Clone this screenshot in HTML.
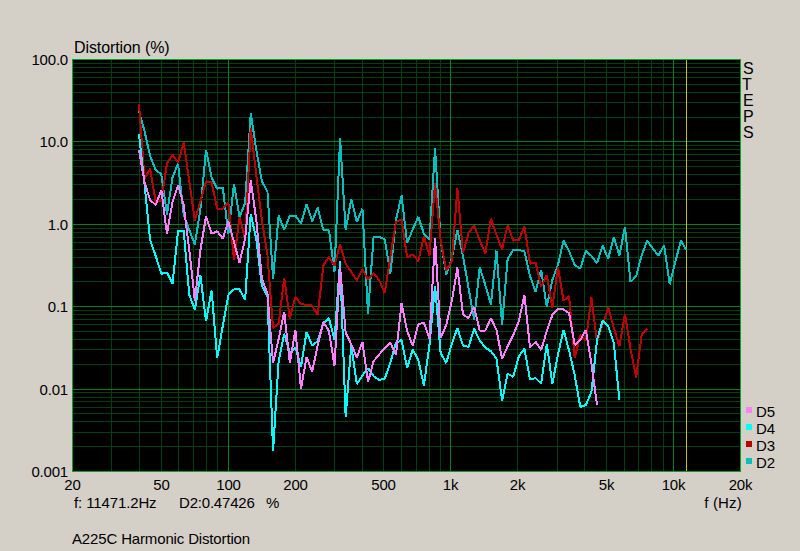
<!DOCTYPE html>
<html><head><meta charset="utf-8"><title>A225C Harmonic Distortion</title>
<style>
html,body{margin:0;padding:0;background:#d4d0c8;}
body{width:800px;height:551px;position:relative;overflow:hidden;font-family:"Liberation Sans",Arial,sans-serif;font-size:16px;color:#000;}
.t{position:absolute;white-space:pre;line-height:20px;height:20px;font-size:15px;}
.b{font-size:16px;}
</style></head><body>
<svg width="800" height="551" viewBox="0 0 800 551" style="position:absolute;left:0;top:0">
<rect x="72" y="59" width="669" height="413" fill="#000"/>
<rect x="72" y="446" width="669" height="1" fill="#004010"/>
<rect x="72" y="432" width="669" height="1" fill="#004010"/>
<rect x="72" y="421" width="669" height="1" fill="#004010"/>
<rect x="72" y="413" width="669" height="1" fill="#004010"/>
<rect x="72" y="407" width="669" height="1" fill="#004010"/>
<rect x="72" y="401" width="669" height="1" fill="#004010"/>
<rect x="72" y="397" width="669" height="1" fill="#004010"/>
<rect x="72" y="392" width="669" height="1" fill="#004010"/>
<rect x="72" y="364" width="669" height="1" fill="#004010"/>
<rect x="72" y="349" width="669" height="1" fill="#004010"/>
<rect x="72" y="339" width="669" height="1" fill="#004010"/>
<rect x="72" y="331" width="669" height="1" fill="#004010"/>
<rect x="72" y="324" width="669" height="1" fill="#004010"/>
<rect x="72" y="319" width="669" height="1" fill="#004010"/>
<rect x="72" y="314" width="669" height="1" fill="#004010"/>
<rect x="72" y="310" width="669" height="1" fill="#004010"/>
<rect x="72" y="281" width="669" height="1" fill="#004010"/>
<rect x="72" y="267" width="669" height="1" fill="#004010"/>
<rect x="72" y="257" width="669" height="1" fill="#004010"/>
<rect x="72" y="249" width="669" height="1" fill="#004010"/>
<rect x="72" y="242" width="669" height="1" fill="#004010"/>
<rect x="72" y="237" width="669" height="1" fill="#004010"/>
<rect x="72" y="232" width="669" height="1" fill="#004010"/>
<rect x="72" y="228" width="669" height="1" fill="#004010"/>
<rect x="72" y="199" width="669" height="1" fill="#004010"/>
<rect x="72" y="184" width="669" height="1" fill="#004010"/>
<rect x="72" y="174" width="669" height="1" fill="#004010"/>
<rect x="72" y="166" width="669" height="1" fill="#004010"/>
<rect x="72" y="160" width="669" height="1" fill="#004010"/>
<rect x="72" y="154" width="669" height="1" fill="#004010"/>
<rect x="72" y="149" width="669" height="1" fill="#004010"/>
<rect x="72" y="145" width="669" height="1" fill="#004010"/>
<rect x="72" y="117" width="669" height="1" fill="#004010"/>
<rect x="72" y="102" width="669" height="1" fill="#004010"/>
<rect x="72" y="92" width="669" height="1" fill="#004010"/>
<rect x="72" y="84" width="669" height="1" fill="#004010"/>
<rect x="72" y="77" width="669" height="1" fill="#004010"/>
<rect x="72" y="72" width="669" height="1" fill="#004010"/>
<rect x="72" y="67" width="669" height="1" fill="#004010"/>
<rect x="72" y="63" width="669" height="1" fill="#004010"/>
<rect x="111" y="59" width="1" height="413" fill="#004010"/>
<rect x="139" y="59" width="1" height="413" fill="#004010"/>
<rect x="161" y="59" width="1" height="413" fill="#004010"/>
<rect x="178" y="59" width="1" height="413" fill="#004010"/>
<rect x="193" y="59" width="1" height="413" fill="#004010"/>
<rect x="206" y="59" width="1" height="413" fill="#004010"/>
<rect x="217" y="59" width="1" height="413" fill="#004010"/>
<rect x="295" y="59" width="1" height="413" fill="#004010"/>
<rect x="334" y="59" width="1" height="413" fill="#004010"/>
<rect x="362" y="59" width="1" height="413" fill="#004010"/>
<rect x="383" y="59" width="1" height="413" fill="#004010"/>
<rect x="401" y="59" width="1" height="413" fill="#004010"/>
<rect x="416" y="59" width="1" height="413" fill="#004010"/>
<rect x="429" y="59" width="1" height="413" fill="#004010"/>
<rect x="440" y="59" width="1" height="413" fill="#004010"/>
<rect x="517" y="59" width="1" height="413" fill="#004010"/>
<rect x="557" y="59" width="1" height="413" fill="#004010"/>
<rect x="584" y="59" width="1" height="413" fill="#004010"/>
<rect x="606" y="59" width="1" height="413" fill="#004010"/>
<rect x="624" y="59" width="1" height="413" fill="#004010"/>
<rect x="638" y="59" width="1" height="413" fill="#004010"/>
<rect x="651" y="59" width="1" height="413" fill="#004010"/>
<rect x="663" y="59" width="1" height="413" fill="#004010"/>
<rect x="72" y="389" width="669" height="1" fill="#008220"/>
<rect x="72" y="306" width="669" height="1" fill="#008220"/>
<rect x="72" y="224" width="669" height="1" fill="#008220"/>
<rect x="72" y="141" width="669" height="1" fill="#008220"/>
<rect x="228" y="59" width="1" height="413" fill="#008220"/>
<rect x="450" y="59" width="1" height="413" fill="#008220"/>
<rect x="673" y="59" width="1" height="413" fill="#008220"/>
<rect x="686" y="59" width="1" height="413" fill="#c8c000"/>
<rect x="72.5" y="59.5" width="668" height="412" fill="none" stroke="#00a428" stroke-width="1"/>
<polyline points="139.00,111.25 144.59,131.40 150.17,156.25 155.76,170.00 161.34,174.40 166.93,214.40 172.51,177.50 178.10,163.75 183.69,215.00 189.27,230.00 194.86,244.40 200.44,209.00 206.03,150.00 211.62,177.50 217.20,188.75 222.79,187.50 228.37,234.00 233.96,183.75 239.54,217.20 245.13,203.00 250.72,113.10 256.30,150.00 261.89,181.25 267.47,191.90 273.06,278.75 278.64,215.60 284.23,230.00 289.82,215.60 295.40,215.60 300.99,223.75 306.57,204.40 312.16,221.25 317.74,207.50 323.33,230.00 328.92,230.00 334.50,271.90 340.09,138.10 345.67,230.00 351.26,198.75 356.85,221.90 362.43,208.75 368.02,313.75 373.60,236.90 379.19,236.90 384.77,239.40 390.36,273.75 395.95,220.00 401.53,195.60 407.12,243.10 412.70,229.40 418.29,216.90 423.87,233.75 429.46,240.00 435.05,148.10 440.63,241.00 446.22,274.40 451.80,258.75 457.39,230.00 462.98,256.00 468.56,288.00 474.15,320.00 479.73,266.90 485.32,285.00 490.90,304.40 496.49,250.60 502.08,325.00 507.66,258.75 513.25,250.00 518.83,250.00 524.42,251.25 530.00,276.00 535.59,291.90 541.18,270.00 546.76,306.90 552.35,280.00 557.93,265.00 563.52,240.60 569.10,251.25 574.69,265.00 580.28,268.75 585.86,250.60 591.45,256.00 597.03,263.10 602.62,245.60 608.21,258.75 613.79,236.90 619.38,255.60 624.96,226.90 630.55,282.00 636.13,276.25 641.72,255.00 647.31,240.60 652.89,248.75 658.48,255.60 664.06,245.00 669.65,284.30 675.23,262.50 680.82,240.60 686.41,250.00" fill="none" stroke="#00c0c0" stroke-width="2" stroke-linejoin="bevel" stroke-linecap="butt" shape-rendering="crispEdges"/>
<polyline points="139.00,104.40 144.59,178.75 150.17,168.75 155.76,201.90 161.34,200.50 166.93,163.75 172.51,154.60 178.10,162.50 183.69,142.50 189.27,181.00 194.86,220.60 200.44,201.00 206.03,181.25 211.62,182.50 217.20,208.75 222.79,208.75 228.37,202.50 233.96,260.00 239.54,217.50 245.13,239.00 250.72,128.10 256.30,175.00 261.89,220.00 267.47,255.00 273.06,328.10 278.64,323.75 284.23,278.10 289.82,318.75 295.40,296.90 300.99,304.40 306.57,304.60 312.16,305.60 317.74,315.00 323.33,265.60 328.92,256.90 334.50,265.60 340.09,244.40 345.67,263.75 351.26,271.90 356.85,280.60 362.43,269.40 368.02,279.40 373.60,273.10 379.19,280.00 384.77,293.10 390.36,257.00 395.95,221.90 401.53,219.40 407.12,257.50 412.70,254.40 418.29,261.25 423.87,236.25 429.46,255.60 435.05,183.10 440.63,240.00 446.22,270.60 451.80,261.25 457.39,188.10 462.98,253.10 468.56,233.10 474.15,225.60 479.73,240.00 485.32,253.75 490.90,218.75 496.49,235.00 502.08,249.40 507.66,225.00 513.25,240.60 518.83,240.00 524.42,226.25 530.00,263.75 535.59,262.50 541.18,286.90 546.76,275.00 552.35,308.10 557.93,266.90 563.52,300.60 569.10,296.25 574.69,358.10 580.28,335.00 585.86,340.60 591.45,297.50 597.03,342.00 602.62,325.00 608.21,307.50 613.79,328.00 619.38,346.25 624.96,313.75 630.55,349.00 636.13,377.50 641.72,334.40 647.31,328.75" fill="none" stroke="#c00000" stroke-width="2" stroke-linejoin="bevel" stroke-linecap="butt" shape-rendering="crispEdges"/>
<polyline points="139.00,134.40 144.59,185.00 150.17,240.00 155.76,256.25 161.34,273.75 166.93,272.50 172.51,283.75 178.10,230.60 183.69,230.60 189.27,295.00 194.86,309.40 200.44,275.60 206.03,321.25 211.62,290.60 217.20,358.10 222.79,326.00 228.37,295.00 233.96,289.40 239.54,289.40 245.13,300.00 250.72,213.75 256.30,239.00 261.89,286.00 267.47,296.00 273.06,451.00 278.64,361.00 284.23,333.75 289.82,352.50 295.40,347.50 300.99,366.90 306.57,331.90 312.16,345.60 317.74,341.00 323.33,323.75 328.92,318.10 334.50,340.00 340.09,260.60 345.67,417.00 351.26,345.00 356.85,384.00 362.43,375.60 368.02,368.10 373.60,376.25 379.19,380.00 384.77,378.75 390.36,362.50 395.95,343.10 401.53,340.00 407.12,368.10 412.70,349.40 418.29,360.00 423.87,385.60 429.46,345.00 435.05,285.60 440.63,353.00 446.22,363.10 451.80,343.75 457.39,328.10 462.98,345.60 468.56,346.90 474.15,328.75 479.73,340.60 485.32,347.50 490.90,351.25 496.49,358.75 502.08,400.60 507.66,373.75 513.25,376.90 518.83,356.25 524.42,348.75 530.00,379.40 535.59,378.10 541.18,383.75 546.76,343.75 552.35,383.75 557.93,355.00 563.52,330.00 569.10,350.60 574.69,375.00 580.28,406.90 585.86,405.00 591.45,392.00 597.03,340.00 602.62,320.60 608.21,326.25 613.79,342.50 619.38,400.00" fill="none" stroke="#00ffff" stroke-width="2" stroke-linejoin="bevel" stroke-linecap="butt" shape-rendering="crispEdges"/>
<polyline points="139.00,150.00 144.59,182.50 150.17,200.00 155.76,205.00 161.34,190.00 166.93,233.75 172.51,202.00 178.10,185.00 183.69,205.00 189.27,250.00 194.86,300.60 200.44,250.00 206.03,216.25 211.62,233.75 217.20,231.25 222.79,238.75 228.37,221.25 233.96,242.00 239.54,262.50 245.13,238.75 250.72,180.60 256.30,220.00 261.89,278.75 267.47,293.75 273.06,363.10 278.64,339.00 284.23,311.90 289.82,363.10 295.40,330.00 300.99,388.75 306.57,356.90 312.16,371.90 317.74,345.00 323.33,321.90 328.92,331.00 334.50,365.60 340.09,266.90 345.67,332.50 351.26,344.40 356.85,357.50 362.43,341.90 368.02,381.90 373.60,361.25 379.19,354.40 384.77,348.10 390.36,342.50 395.95,355.00 401.53,303.10 407.12,331.00 412.70,345.60 418.29,324.40 423.87,322.50 429.46,338.75 435.05,238.10 440.63,338.10 446.22,325.00 451.80,301.00 457.39,267.50 462.98,314.40 468.56,318.10 474.15,306.90 479.73,330.60 485.32,330.60 490.90,318.10 496.49,330.00 502.08,358.75 507.66,346.25 513.25,335.00 518.83,321.25 524.42,295.00 530.00,347.50 535.59,341.90 541.18,350.00 546.76,331.00 552.35,315.00 557.93,308.75 563.52,309.40 569.10,313.10 574.69,345.00 580.28,340.00 585.86,330.00 591.45,364.00 597.03,405.00" fill="none" stroke="#ff80ff" stroke-width="2" stroke-linejoin="bevel" stroke-linecap="butt" shape-rendering="crispEdges"/>
<rect x="746" y="407" width="6" height="6" fill="#ff80ff"/>
<rect x="746" y="424" width="6" height="6" fill="#00ffff"/>
<rect x="746" y="441" width="6" height="6" fill="#c00000"/>
<rect x="746" y="458" width="6" height="6" fill="#00c0c0"/>
</svg>
<div class="t b" style="top:38px;letter-spacing:-0.1px;left:74px;">Distortion (%)</div>
<div class="t" style="top:50px;letter-spacing:-0.2px;right:732px;">100.0</div>
<div class="t" style="top:132px;letter-spacing:-0.2px;right:732px;">10.0</div>
<div class="t" style="top:215px;letter-spacing:-0.2px;right:732px;">1.0</div>
<div class="t" style="top:297px;letter-spacing:-0.2px;right:732px;">0.1</div>
<div class="t" style="top:380px;letter-spacing:-0.2px;right:732px;">0.01</div>
<div class="t" style="top:462px;letter-spacing:-0.2px;right:732px;">0.001</div>
<div class="t" style="top:475px;letter-spacing:-0.2px;left:12.5px;width:120px;text-align:center;">20</div>
<div class="t" style="top:475px;letter-spacing:-0.2px;left:101.5px;width:120px;text-align:center;">50</div>
<div class="t" style="top:475px;letter-spacing:-0.2px;left:168.5px;width:120px;text-align:center;">100</div>
<div class="t" style="top:475px;letter-spacing:-0.2px;left:235.5px;width:120px;text-align:center;">200</div>
<div class="t" style="top:475px;letter-spacing:-0.2px;left:323.5px;width:120px;text-align:center;">500</div>
<div class="t" style="top:475px;letter-spacing:-0.2px;left:390.5px;width:120px;text-align:center;">1k</div>
<div class="t" style="top:475px;letter-spacing:-0.2px;left:457.5px;width:120px;text-align:center;">2k</div>
<div class="t" style="top:475px;letter-spacing:-0.2px;left:546.5px;width:120px;text-align:center;">5k</div>
<div class="t" style="top:475px;letter-spacing:-0.2px;left:613.5px;width:120px;text-align:center;">10k</div>
<div class="t" style="top:475px;letter-spacing:-0.2px;left:680.5px;width:120px;text-align:center;">20k</div>
<div class="t" style="top:493px;letter-spacing:-0.12px;left:74px;">f: 11471.2Hz</div>
<div class="t" style="top:493px;letter-spacing:-0.2px;left:179px;">D2:0.47426</div>
<div class="t" style="top:493px;letter-spacing:-0.2px;left:266px;">%</div>
<div class="t" style="top:493px;letter-spacing:0.2px;right:58px;">f (Hz)</div>
<div class="t" style="top:529px;letter-spacing:-0.15px;left:72px;">A225C Harmonic Distortion</div>
<div class="t b" style="top:59px;left:743px;">S</div>
<div class="t b" style="top:75px;left:742px;">T</div>
<div class="t b" style="top:91px;left:743px;">E</div>
<div class="t b" style="top:107px;left:743px;">P</div>
<div class="t b" style="top:123px;left:743px;">S</div>
<div class="t" style="top:402px;letter-spacing:-0.2px;left:756px;">D5</div>
<div class="t" style="top:419px;letter-spacing:-0.2px;left:756px;">D4</div>
<div class="t" style="top:436px;letter-spacing:-0.2px;left:756px;">D3</div>
<div class="t" style="top:453px;letter-spacing:-0.2px;left:756px;">D2</div>
</body></html>
